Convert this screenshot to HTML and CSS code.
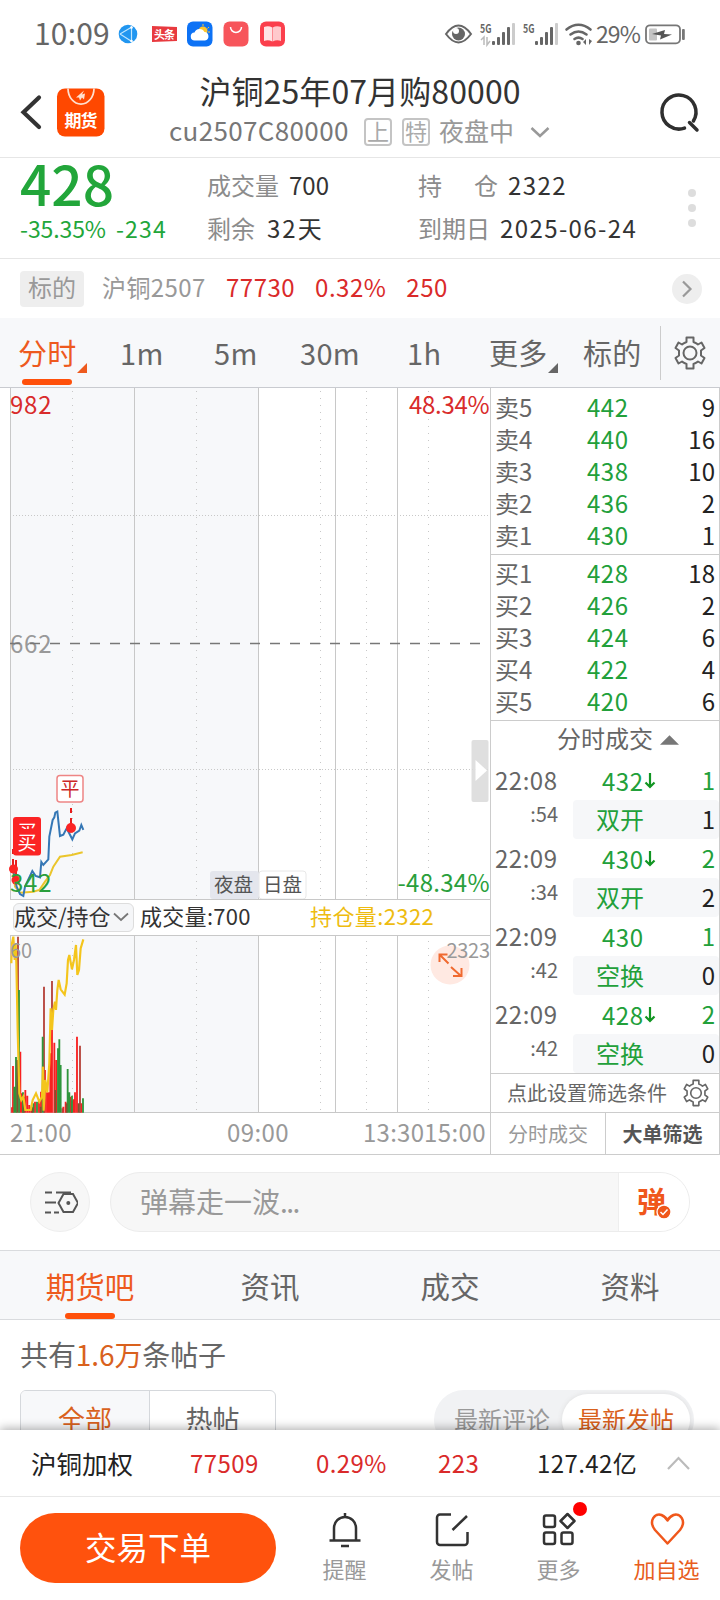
FILE: index.html
```html
<!DOCTYPE html>
<html lang="zh-CN">
<head>
<meta charset="utf-8">
<title>沪铜25年07月购80000</title>
<link rel="stylesheet" href="styles.css">
</head>
<body>
<div class="page">
  <div class="status">
    <span class="clock">10:09</span>
    <svg class="status-apps" width="180" height="66" viewBox="112 0 180 66">
      <circle cx="128" cy="34" r="9.3" fill="#2196f0"/>
      <path d="M120 34L131 27.500M120 34L131 41M131.500 26V42.500" stroke="#bfe6ff" stroke-width="1.200" fill="none"/>
      <circle cx="131.500" cy="27.500" r="1.300" fill="#fff"/><circle cx="131.500" cy="41" r="1.300" fill="#fff"/>
      <path d="M152 26l25 1v14l-25 1z" fill="#e83a3f"/>
      <text x="154" y="38.500" font-size="11" font-weight="700" fill="#fff" textLength="21">头条</text>
      <rect x="187" y="21.500" width="25.500" height="25" rx="6" fill="#0d72f5"/>
      <circle cx="203" cy="31" r="4.500" fill="#ffc62e"/>
      <path d="M203 24v2M209 27l-1.500 1.500M210 32h-2" stroke="#ffc62e" stroke-width="1"/>
      <path d="M195 40.500a4 4 0 0 1-.5-8a5.500 5.500 0 0 1 10-.500a4.300 4.300 0 0 1 .5 8.500z" fill="#fff"/>
      <rect x="223.500" y="21.500" width="25" height="25" rx="6" fill="#f7555b"/>
      <path d="M230.500 27a5.500 5.500 0 0 0 11 0" fill="none" stroke="#fff" stroke-width="1.500"/>
      <rect x="260" y="21.500" width="25" height="25" rx="6" fill="#fb3f4c"/>
      <path d="M264 27q4.500-1.500 8.300.500v14q-4-2-8.300-.500z" fill="#ffe3e4"/>
      <path d="M281 27q-4.500-1.500-8.300.500v14q4-2 8.300-.500z" fill="#ffc9cc"/>
    </svg>
    <svg class="status-signal" width="154" height="66" viewBox="442 0 154 66">
      <path d="M446 34q12.500-17 25 0q-12.500 17-25 0z" fill="none" stroke="#666" stroke-width="2"/>
      <circle cx="458.500" cy="34" r="6.500" fill="#666"/><circle cx="456" cy="31" r="3" fill="#fff"/>
      <g fill="#666">
        <text x="480" y="33" font-size="12" font-weight="700" textLength="11.500" lengthAdjust="spacingAndGlyphs">5G</text>
        <text x="523" y="33" font-size="12" font-weight="700" textLength="11.500" lengthAdjust="spacingAndGlyphs">5G</text>
        <rect x="492" y="41" width="3" height="4" rx="1"/><rect x="497" y="37" width="3" height="8" rx="1"/><rect x="502" y="32" width="3" height="13" rx="1"/><rect x="507" y="27" width="3" height="18" rx="1"/>
        <rect x="535" y="41" width="3" height="4" rx="1"/><rect x="540" y="37" width="3" height="8" rx="1"/><rect x="545" y="32" width="3" height="13" rx="1"/><rect x="550" y="27" width="3" height="18" rx="1"/>
      </g>
      <rect x="512" y="23" width="3" height="22" rx="1" fill="#ccc"/><rect x="555" y="23" width="3" height="22" rx="1" fill="#ccc"/>
      <path d="M481 40l3-3v8M490 41l-3 4v-8" fill="none" stroke="#bbb" stroke-width="1.500"/>
      <g fill="none" stroke="#666" stroke-width="2.600" stroke-linecap="round"><path d="M566.500 29.500q12-9.500 24 0M570.500 34.500q8-6 16 0M574.500 39q4-2.800 8 0"/></g>
      <circle cx="578.500" cy="43" r="2.300" fill="#666"/>
      <path d="M583 42l3-3v6zM592 41l-3 4v-6z" fill="#666"/>
    </svg>
    <span class="percent">29%</span>
    <svg width="44" height="66" viewBox="644 0 44 66">
      <rect x="646" y="25.300" width="34" height="18" rx="4" fill="#fff" stroke="#777" stroke-width="1.800"/>
      <rect x="649" y="28.500" width="8" height="12" rx="1" fill="#c4c4c4"/>
      <path d="M652 34l13-4-1 4 8 .500-12 5 1-4z" fill="#555"/>
      <rect x="682" y="29" width="2.800" height="11" rx="1" fill="#777"/>
    </svg>
  </div>

  <div class="header">
    <div class="header-left">
      <svg width="110" height="80" viewBox="0 72 110 80">
        <path d="M39 97.500L23.500 112.300L39 127" fill="none" stroke="#333" stroke-width="4.200" stroke-linecap="round"/>
        <rect x="57" y="88.500" width="47.500" height="48" rx="8" fill="#ff4800"/>
        <path d="M68 88.500a12.500 15 0 0 0 26 0" fill="none" stroke="#ffe0d0" stroke-width="1.700"/>
        <path d="M76 97.500l8-7-2 4 3-1-1 6-2-2-2 3-1-3z" fill="#ffe0d0"/>
        <text x="64.500" y="126.500" font-size="17" font-weight="700" fill="#fff" textLength="33">期货</text>
      </svg>
    </div>
    <div class="header-mid">
      <div class="title">沪铜25年07月购80000</div>
      <div class="subtitle"><span class="code">cu2507C80000</span><span class="chip">上</span><span class="chip">特</span><span class="session">夜盘中</span>
        <svg width="20" height="12" viewBox="0 0 20 12"><path d="M1.500 2L10 10L18.500 2" fill="none" stroke="#999" stroke-width="2.500"/></svg>
      </div>
    </div>
    <div class="header-right">
      <svg width="44" height="44" viewBox="658 90 44 44"><path d="M684.500 128.100A17 17 0 1 1 693.400 121" fill="none" stroke="#2f2f2f" stroke-width="3.500" stroke-linecap="round"/><path d="M689.500 122.500L697 130" stroke="#2f2f2f" stroke-width="3.500" stroke-linecap="round"/></svg>
    </div>
  </div>

  <div class="quote">
    <div class="quote-main"><div class="last">428</div><div class="change"><span>-35.35%</span><span class="diff">-234</span></div></div>
    <div class="quote-col"><div><label>成交量</label><b>700</b></div><div><label>剩余</label><b class="days">32天</b></div></div>
    <div class="quote-col"><div><label class="spread"><i>持</i><i>仓</i></label><b class="wide">2322</b></div><div><label>到期日</label><b class="wide">2025-06-24</b></div></div>
    <div class="dots"><i></i><i></i><i></i></div>
  </div>

  <div class="underlying">
    <span class="tag">标的</span><span class="u-name">沪铜2507</span><span class="u-num">77730</span><span class="u-num">0.32%</span><span class="u-num">250</span>
    <span class="go"><svg width="12" height="18" viewBox="0 0 12 18"><path d="M2 1.500L9.500 9L2 16.500" fill="none" stroke="#999" stroke-width="2.200"/></svg></span>
  </div>

  <div class="periods">
    <span class="on">分时</span><span>1m</span><span>5m</span><span>30m</span><span>1h</span><span class="more">更多</span><span>标的</span>
    <div class="gear-box">
      <svg class="gear" width="32" height="34" viewBox="-16 -17 32 34"><path d="M-3.500-15.500H3.500V-11Q7-9.500 8-8.500L11.500-10.500L14.500-5L11-2.500V2.500L14.500 5L11.500 10.500L8 8.500Q7 9.500 3.500 11V15.500H-3.500V11Q-7 9.500-8 8.500L-11.500 10.500L-14.500 5L-11 2.500V-2.500L-14.500-5L-11.500-10.500L-8-8.500Q-7-9.500-3.500-11Z"/><circle r="6.500"/></svg>
    </div>
  </div>

  <div class="market">
    <div class="charts">
      <svg class="price" width="490" height="511" viewBox="0 388 490 511">
        <rect x="10" y="388" width="248.500" height="511" fill="#f7f8fa"/>
        <g class="grid"><path d="M10.500 388V899M134.500 388V899M258.500 388V899M335.500 388V899M397.500 388V899"/>
        <path class="dot-v" d="M72.500 391V899M196.500 391V899M320.500 391V899M366.500 391V899M428.500 391V899"/>
        <path class="dot-h" d="M13 515.500H490M13 769.500H490"/></g>
        <text x="10" y="653" class="t-grey" textLength="41.500">662</text>
        <path d="M10 643.500H482" stroke="#777" stroke-width="1.500" stroke-dasharray="10 10"/>
        <text x="10" y="414" class="t-red" textLength="41.500">982</text>
        <text x="409" y="414" class="t-red" textLength="80.500">48.34%</text>
        <text x="397.500" y="892" class="t-green" textLength="92">-48.34%</text>
        <g transform="translate(0 740) scale(.3333)" fill="none" stroke-width="6">
          <path stroke="#ebc52b" d="M40 400L45 440L60 458L100 455L118 450L135 425L150 405L160 380L180 350L215 345L248 337"/>
          <path stroke="#3577b5" d="M38 385L50 440L60 462L70 468L75 440L97 393L107 408L120 412L124 366L130 375L145 358L148 290L158 240L163 232L166 218L172 215L180 288L190 284L200 265L217 298L225 280L238 272L244 255L250 270"/>
        </g>
        <path d="M71 808v5M71 818v8M13 849v5M13 859v8M16 860v16" stroke="#e71d1d" stroke-width="2"/>
        <g fill="#fb2424"><circle cx="71" cy="828" r="5"/><circle cx="13.500" cy="869" r="4.500"/><circle cx="16" cy="880" r="4.500"/></g>
        <text x="10" y="892" class="t-green" textLength="41.500">342</text>
        <rect x="57" y="775.500" width="26" height="26.500" rx="3" fill="#fff" stroke="#ee8585" stroke-width="1.500"/>
        <text x="60.500" y="795.500" font-size="19" fill="#cc2828">平</text>
        <rect x="13" y="817" width="28" height="38.500" rx="3" fill="#fb2424"/>
        <svg x="13" y="817" width="28" height="12" viewBox="13 817 28 12"><text x="17.500" y="838.500" font-size="19" fill="#fff">买</text></svg>
        <text x="17.500" y="849.500" font-size="19" fill="#fff">买</text>
        <rect x="210" y="871" width="49" height="28" rx="3" fill="#e4e6ed"/>
        <rect x="259" y="871" width="47" height="28" rx="3" fill="#fff" stroke="#e8e8e8"/>
        <text x="214" y="892" font-size="19.500" fill="#555">夜盘</text><text x="263" y="892" font-size="19.500" fill="#555">日盘</text>
        <rect x="471.500" y="740" width="17" height="62" rx="2" fill="#d9d9d9" opacity=".85"/><path d="M475.500 760L487 770.500L475.500 781Z" fill="#fff"/>
      </svg>
      <div class="legend">
        <span class="pick">成交/持仓<svg width="16" height="10" viewBox="0 0 16 10"><path d="M1 1.500L8 8L15 1.500" fill="none" stroke="#777" stroke-width="1.800"/></svg></span>
        <span class="l-vol">成交量:700</span><span class="l-oi">持仓量:2322</span>
      </div>
      <svg class="volume" width="490" height="219" viewBox="0 935 490 219">
        <rect x="10" y="935" width="248.500" height="177" fill="#f7f8fa"/>
        <g class="grid"><path d="M10.500 935V1112M134.500 935V1112M258.500 935V1112M335.500 935V1112M397.500 935V1112M10 935.500H490M10 1112.500H490"/>
        <path class="dot-v" d="M72.500 941V1112M196.500 941V1112M320.500 941V1112M366.500 941V1112M428.500 941V1112"/></g>
        <g transform="translate(0 930) scale(.3333)" fill="none" stroke-width="5.500">
          <path stroke="#f82020" d="M36 548V532M39 548V408M61 548V365M66 548V490M76 548V480M82 548V497M88 548V525M94 548V530M105 548V515M117 548V512M123 548V485M135 548V420M141 548V487M146 548V487M151 548V370M156 548V288M163 548V338M169 548V390M190 548V530M197 548V515M212 548V500M221 548V508M225 548V487M231 548V320M244 548V520"/>
          <path stroke="#b5423a" d="M54 300V20M132 548V170M156 288V153M240 548V347M187 548V535M215 548V512"/>
          <path stroke="#2e963c" d="M43 548V470M48 548V381M57 548V180M69 548V487M100 548V520M111 548V515M128 548V320M174 548V355M178 548V328M182 548V405M203 548V417M208 548V487M216 548V497M249 548V505"/>
          <path stroke="#7c5630" d="M52 548V390M72 548V500M97 548V532M122 548V530M166 548V480M200 548V520M236 548V520"/>
          <path stroke="#f4c51c" stroke-width="6.500" d="M34 100L36 40L40 20L44 90L47 40L49 100L53 300L58 490L64 510L70 500L76 540L92 540L98 510L108 490L118 515L126 500L129 410L131 542L136 450L142 487L148 400L152 235L156 300L160 240L165 215L168 240L172 180L176 150L182 178L194 194L200 160L204 90L208 75L216 118L222 90L228 45L232 135L237 120L242 55L250 28"/>
        </g>
        <text x="10" y="958" class="t-small">60</text>
        <circle cx="450" cy="965" r="19.500" fill="#ffe9e2"/>
        <path d="M448.500 963.500L440 955M439.500 962V954.500H447.500M451 967L461 976M461.500 968V976H453" fill="none" stroke="#f06a30" stroke-width="2"/>
        <text x="446.500" y="958" class="t-small" textLength="43.500">2323</text>
        <text x="10" y="1142" class="t-grey" textLength="61.500">21:00</text><text x="227" y="1142" class="t-grey" textLength="61.500">09:00</text><text x="363" y="1142" class="t-grey" textLength="61">13:30</text><text x="424" y="1142" class="t-grey" textLength="61.500">15:00</text>
      </svg>
    </div>

    <div class="book">
      <div class="levels">
        <p><span>卖5</span><em>442</em><b>9</b></p><p><span>卖4</span><em>440</em><b>16</b></p><p><span>卖3</span><em>438</em><b>10</b></p><p><span>卖2</span><em>436</em><b>2</b></p><p><span>卖1</span><em>430</em><b>1</b></p>
      </div>
      <div class="levels bids">
        <p><span>买1</span><em>428</em><b>18</b></p><p><span>买2</span><em>426</em><b>2</b></p><p><span>买3</span><em>424</em><b>6</b></p><p><span>买4</span><em>422</em><b>4</b></p><p><span>买5</span><em>420</em><b>6</b></p>
      </div>
      <div class="ticks-title">分时成交<svg width="19" height="10" viewBox="0 0 20 10"><path d="M0 10L10 0L20 10Z" fill="#777"/></svg></div>
      <div class="ticks">
        <div class="tick"><span>22:08</span><em>432<svg class="down" viewBox="0 0 12 18"><path d="M6 1V15M1.500 10.500L6 15L10.500 10.500"/></svg></em><b>1</b><small>:54</small><div class="kind"><i>双开</i><u>1</u></div></div>
        <div class="tick"><span>22:09</span><em>430<svg class="down" viewBox="0 0 12 18"><path d="M6 1V15M1.500 10.500L6 15L10.500 10.500"/></svg></em><b>2</b><small>:34</small><div class="kind"><i>双开</i><u>2</u></div></div>
        <div class="tick"><span>22:09</span><em>430</em><b>1</b><small>:42</small><div class="kind"><i>空换</i><u>0</u></div></div>
        <div class="tick"><span>22:09</span><em>428<svg class="down" viewBox="0 0 12 18"><path d="M6 1V15M1.500 10.500L6 15L10.500 10.500"/></svg></em><b>2</b><small>:42</small><div class="kind"><i>空换</i><u>0</u></div></div>
      </div>
      <div class="filter">点此设置筛选条件
        <svg class="gear" width="26" height="28" viewBox="-16 -17 32 34"><path d="M-3.500-15.500H3.500V-11Q7-9.500 8-8.500L11.500-10.500L14.500-5L11-2.500V2.500L14.500 5L11.500 10.500L8 8.500Q7 9.500 3.500 11V15.500H-3.500V11Q-7 9.500-8 8.500L-11.500 10.500L-14.500 5L-11 2.500V-2.500L-14.500-5L-11.500-10.500L-8-8.500Q-7-9.500-3.500-11Z"/><circle r="6.500"/></svg>
      </div>
      <div class="book-tabs"><span>分时成交</span><strong>大单筛选</strong></div>
    </div>
  </div>

  <div class="danmu">
    <span class="danmu-set"><svg width="36" height="36" viewBox="42 1184 36 36"><path d="M45 1192.500h7M56 1192.500h15M45 1202.500h11M45 1212.500h6M54 1212.500h5" stroke="#555" stroke-width="2"/><path d="M63.500 1194h9.500l5 9-5 9h-9.500l-5-9z" fill="#f7f7f7" stroke="#555" stroke-width="2"/><circle cx="68.300" cy="1203" r="2" fill="#555"/></svg></span>
    <div class="danmu-input"><span>弹幕走一波<i class="ellipsis">...</i></span><div class="danmu-on">弹<svg width="16" height="16" viewBox="-8 -8 16 16"><circle r="7" fill="#f0571b" stroke="#fff" stroke-width="1.300"/><path d="M-3.500 0L-1 2.500L3.500-2.500" fill="none" stroke="#fff" stroke-width="1.500"/></svg></div></div>
  </div>

  <div class="sections"><span class="on">期货吧</span><span>资讯</span><span>成交</span><span>资料</span></div>

  <div class="posts">
    <div class="count">共有<em>1.6万</em>条帖子</div>
    <div class="post-bar">
      <div class="scope"><span class="on">全部</span><span>热帖</span></div>
      <div class="sort"><span>最新评论</span><span class="on">最新发帖</span></div>
    </div>
  </div>

  <div class="ticker"><span>沪铜加权</span><em>77509</em><em>0.29%</em><em>223</em><span>127.42亿</span>
    <svg width="24" height="16" viewBox="0 0 24 16"><path d="M2 14L12.500 3L23 14" fill="none" stroke="#bbb" stroke-width="2.200"/></svg></div>

  <div class="actions">
    <div class="order">交易下单</div>
    <div class="act"><svg width="40" height="40" viewBox="325 1509 40 40"><path d="M334 1541V1529a11 11 0 0 1 22 0V1541M329.500 1541.500H360.500M345 1518V1514M341 1547H349" fill="none" stroke="#333" stroke-width="2.500"/></svg><span>提醒</span></div>
    <div class="act"><svg width="40" height="40" viewBox="432 1509 40 40"><path d="M451 1515.500H440a3 3 0 0 0-3 3V1543a3 3 0 0 0 3 3H464.500a3 3 0 0 0 3-3V1533M452.500 1531L467 1517" fill="none" stroke="#333" stroke-width="2.500"/></svg><span>发帖</span></div>
    <div class="act"><svg width="50" height="40" viewBox="534 1509 50 40"><g fill="none" stroke="#333" stroke-width="2.500"><rect x="544" y="1516.500" width="11" height="11.500" rx="2"/><rect x="544" y="1533.500" width="11" height="11.500" rx="2"/><rect x="561.500" y="1533.500" width="11" height="11.500" rx="2"/><path d="M567.500 1515L574.500 1522L567.500 1529L560.500 1522Z" stroke-linejoin="round"/></g></svg><i class="badge"></i><span>更多</span></div>
    <div class="act fav"><svg width="40" height="40" viewBox="646 1509 40 40"><path d="M666.500 1544.500L654 1531C647 1522 654 1513.500 660.500 1516Q665 1518 666.500 1521.500Q668 1518 672.500 1516C679 1513.500 686 1522 679 1531Z" fill="none" stroke="#f0571b" stroke-width="2.500" stroke-linejoin="round"/></svg><span>加自选</span></div>
  </div>
</div>
</body>
</html>
```
FILE: styles.css
```css
* { box-sizing: border-box; margin: 0; padding: 0; }
body { background: #fff; }
em, i { font-style: normal; }
u { text-decoration: none; }
b { font-weight: 400; }
svg { display: block; flex: none; }
.page { width: 720px; height: 1600px; overflow: hidden; font-family: "Noto Sans CJK SC", sans-serif; font-size: 24px; color: #333; white-space: nowrap; display: flex; flex-direction: column; }
.page > div { flex: none; }

.status { height: 68px; display: flex; align-items: flex-start; padding-left: 34px; color: #666; }
.clock { width: 78px; font-size: 30px; line-height: 65px; letter-spacing: .2px; }
.status-signal { margin-left: 150px; }
.percent { width: 48px; font-size: 23px; line-height: 67px; letter-spacing: -.9px; }

.header { height: 90px; display: grid; grid-template-columns: 160px 1fr 160px; border-bottom: 1px solid #e6e6e6; }
.header-left { padding-top: 4px; }
.header-mid { padding-top: 3px; }
.title { font-size: 32px; line-height: 38px; text-align: center; letter-spacing: .1px; }
.subtitle { height: 36px; margin-top: 3px; padding-left: 9px; display: flex; align-items: center; color: #999; }
.code { width: 195px; font-size: 26px; line-height: 36px; letter-spacing: .35px; color: #777; }
.chip { width: 28px; height: 28px; margin: 3px 10px 0 0; border: 2px solid #c4c4c4; border-radius: 4px; font-size: 22px; line-height: 21px; text-align: center; color: #aaa; }
.session { width: 89px; margin-left: -1px; font-size: 25px; line-height: 36px; }
.subtitle svg { margin: 3px 0 0 2px; }
.header-right { padding: 22px 0 0 98px; }

.quote { height: 101px; display: grid; grid-template-columns: 187px 211px 264px 1fr; padding-left: 20px; border-bottom: 1px solid #e6e6e6; }
.last { font-size: 55px; font-weight: 500; line-height: 48px; color: #22a63a; }
.change { display: flex; gap: 10px; font-size: 23px; line-height: 45px; letter-spacing: -.1px; color: #22a63a; }
.diff { letter-spacing: 1.2px; }
.quote-col { padding-top: 5px; line-height: 43px; }
.quote-col > div { display: flex; gap: 10px; }
.quote-col label { color: #8c8c8c; }
.quote-col .spread { width: 80px; display: flex; justify-content: space-between; }
.wide { letter-spacing: 1.4px; }
.days { padding-left: 2px; letter-spacing: 2px; }
.dots { padding: 31px 0 0 6px; display: flex; flex-direction: column; gap: 7px; }
.dots i { width: 8px; height: 8px; border-radius: 50%; background: #ddd; }

.underlying { height: 59px; display: flex; align-items: center; padding: 0 18px 0 20px; line-height: 55px; }
.underlying > span { padding-bottom: 5px; }
.underlying .tag { width: 64px; height: 36px; padding: 0; border-radius: 4px; background: #eee; color: #999; text-align: center; line-height: 32px; }
.u-name { width: 124px; margin-left: 18px; letter-spacing: .4px; color: #999; }
.u-num { margin-right: 20px; color: #da2a2a; letter-spacing: .5px; }
.underlying .go { width: 30px; height: 30px; padding: 0; margin-left: auto; border-radius: 50%; background: #eee; display: flex; align-items: center; justify-content: center; }

.periods { height: 70px; display: grid; grid-template-columns: 102px 94px 86px 107px 82px 94px 77px 60px; padding-left: 18px; background: #f7f8fa; border-bottom: 1px solid #c9cbd0; font-size: 29px; line-height: 69px; letter-spacing: .3px; color: #666; }
.periods .on, .periods .more { position: relative; }
.periods .on { color: #ee5a1e; }
.periods .on::before { content: ""; position: absolute; left: 4px; top: 61px; width: 50px; height: 6px; border-radius: 3px; background: #ff500b; }
.periods .on::after, .periods .more::after { content: ""; position: absolute; left: 59px; top: 45px; border-left: 10px solid transparent; border-bottom: 10px solid currentColor; }
.gear-box { height: 54px; margin-top: 8px; padding: 10px 0 0 13px; border-left: 1px solid #ccc; }
.gear { fill: none; stroke: #666; stroke-width: 2; stroke-linejoin: round; }

.market { height: 767px; display: flex; border-bottom: 1px solid #ccc; }
.charts { width: 490px; }
.charts text { font-family: "Noto Sans CJK SC", sans-serif; }
.grid { fill: none; stroke: #c8c8c8; stroke-width: 1; }
.dot-v { stroke-dasharray: 1 6; }
.dot-h { stroke-dasharray: 1 2; }
.t-grey, .t-red, .t-green { font-size: 24px; fill: #999; }
.t-red { fill: #d92b2b; }
.t-green { fill: #2a9f3c; }
.t-small { font-size: 20px; fill: #999; }
.legend { height: 36px; margin-left: 10px; padding: 3px 0 0 3px; display: flex; border-top: 1px solid #c8c8c8; font-size: 22px; line-height: 25px; }
.pick { width: 121px; height: 29px; display: flex; align-items: center; gap: 2px; background: #f5f6f8; border: 1px solid #ddd; border-radius: 6px; line-height: 23px; padding-bottom: 4px; }
.pick svg { margin-top: 3px; }
.l-vol { width: 170px; margin-left: 6px; letter-spacing: .3px; }
.l-oi { color: #eebc10; letter-spacing: .4px; }

.book { width: 230px; border: solid #ccc; border-width: 0 1px; }
.levels { height: 167px; padding: 2px 4px 0 4px; border-bottom: 1px solid #ccc; }
.bids { height: 166px; padding-top: 1px; }
.levels p { height: 32px; display: grid; grid-template-columns: 92px 1fr auto; line-height: 33px; }
.levels span { color: #666; }
.levels em, .ticks { color: #22a03a; }
.levels em, .tick em, .tick span { letter-spacing: .5px; }
.levels b { color: #222; }
.ticks-title { height: 40px; padding-left: 66px; display: flex; gap: 7px; font-size: 24px; line-height: 33px; color: #666; }
.ticks-title svg { margin-top: 14px; }
.ticks { height: 312px; }
.tick { height: 78px; display: grid; grid-template-columns: 82px 1fr 20px; grid-template-rows: 39px 39px; line-height: 38px; }
.tick span { padding-left: 4px; color: #666; }
.tick em { padding-left: 29px; display: flex; align-items: center; }
.down { width: 12px; height: 18px; margin-left: 1px; fill: none; stroke: #119522; stroke-width: 2.200px; }
.tick > b { padding-right: 4px; text-align: right; }
.tick small { padding-right: 15px; font-size: 20px; line-height: 28px; color: #666; text-align: right; width: 82px; }
.kind { grid-column: 2 / 4; display: flex; justify-content: space-between; padding: 0 4px 0 23px; border-radius: 4px; background: #f6f7f9; }
.kind u { color: #222; }
.filter { height: 40px; border: solid #ccc; border-width: 1px 0; padding: 0 10px 0 16px; display: flex; align-items: center; justify-content: space-between; font-size: 20px; line-height: 38px; color: #666; }
.book-tabs { height: 41px; display: grid; grid-template-columns: 114px 1fr; font-size: 20px; line-height: 41px; text-align: center; color: #999; }
.book-tabs strong { border-left: 1px solid #ccc; color: #555; }

.danmu { height: 95px; padding: 17px 30px 0; display: flex; gap: 20px; }
.danmu-set { width: 60px; height: 60px; border: 1px solid #eee; border-radius: 50%; background: #f7f7f7; display: flex; align-items: center; justify-content: center; }
.danmu-input { width: 580px; height: 60px; padding-left: 29px; display: flex; justify-content: space-between; border: 1px solid #ececec; border-radius: 30px; background: #f7f7f7; overflow: hidden; font-size: 28px; line-height: 57px; color: #999; }
.ellipsis { letter-spacing: -1.500px; }
.danmu-on { width: 71px; padding-left: 18px; position: relative; background: #fff; border-left: 1px solid #eee; font-size: 29px; font-weight: 700; line-height: 55px; color: #f0571b; }
.danmu-on svg { position: absolute; left: 37px; top: 31px; }

.sections { height: 70px; display: grid; grid-template-columns: repeat(4, 1fr); border: solid #d9dbde; border-width: 1px 0; background: #f7f8fa; font-size: 29.500px; line-height: 68px; text-align: center; color: #666; }
.sections .on { position: relative; color: #ee5a1e; }
.sections .on::after { content: ""; position: absolute; left: 65px; bottom: 0; width: 50px; height: 6px; border-radius: 3px; background: #ff500b; }

.posts { height: 110px; overflow: hidden; padding: 0 26px 0 20px; }
.count { height: 70px; font-size: 28px; line-height: 69px; color: #666; letter-spacing: -.1px; }
.count em { color: #d9611d; }
.post-bar { display: flex; justify-content: space-between; }
.scope { width: 256px; height: 60px; display: grid; grid-template-columns: 129px 1fr; border: 1px solid #d5d8dc; border-radius: 6px; overflow: hidden; font-size: 27px; line-height: 56px; text-align: center; color: #666; }
.scope .on { background: #f7f8fa; border-right: 1px solid #d5d8dc; color: #d9611d; }
.sort { width: 260px; height: 60px; padding: 4px; display: grid; grid-template-columns: 124px 128px; border-radius: 30px; background: #f1f2f4; line-height: 49px; text-align: center; color: #999; }
.sort span:first-child { padding-left: 4px; }
.sort .on { border-radius: 26px; background: #fff; color: #d9611d; box-shadow: 0 0 5px #ddd; }

.ticker { height: 67px; position: relative; display: grid; grid-template-columns: 159px 126px 122px 99px 129px 1fr; align-items: center; padding-left: 31px; background: #fff; border-bottom: 1px solid #e8e8e8; box-shadow: 0 -2px 9px rgba(0, 0, 0, .3); line-height: 63px; color: #222; letter-spacing: .4px; }
.ticker > span, .ticker em { padding-bottom: 2px; }
.ticker span:first-child { font-size: 25.500px; letter-spacing: 0; }
.ticker em { color: #da2a2a; }

.actions { height: 103px; position: relative; display: grid; grid-template-columns: 271px 107px 107px 107px 109px; padding: 16px 0 0 20px; background: #fff; }
.order { width: 256px; height: 70px; border-radius: 35px; background: #ff520d; color: #fff; font-size: 31.500px; line-height: 67px; text-align: center; }
.act { position: relative; display: flex; flex-direction: column; align-items: center; margin-top: -5px; font-size: 22px; line-height: 34px; color: #999; }
.act span { margin-top: 3px; }
.fav { color: #e85d20; }
.badge { position: absolute; left: 68px; top: -6px; width: 14px; height: 14px; border-radius: 50%; background: #f00; }
```
